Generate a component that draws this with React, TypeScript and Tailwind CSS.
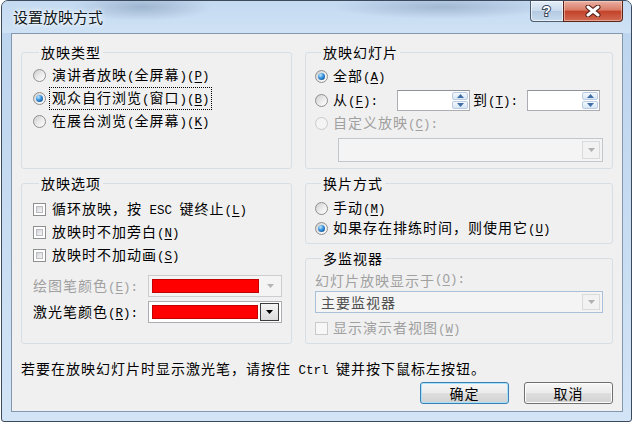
import React from 'react';

const cjk = "font-['Noto_Sans_CJK_SC',sans-serif]";
// half-width latin glyphs, 7.5px per char like the dialog font
const mono = "font-['Liberation_Mono',monospace] text-[12.5px] tracking-normal";

// access key like (P) with underlined letter
function Key({ k, colon = false }: { k: string; colon?: boolean }) {
  return (
    <span className={`${mono} whitespace-pre`}>
      (<span className="underline underline-offset-2">{k}</span>){colon ? ':' : ''}
    </span>
  );
}

function Radio({ checked = false, disabled = false }: { checked?: boolean; disabled?: boolean }) {
  return (
    <span
      className={`flex h-[13px] w-[13px] shrink-0 items-center justify-center rounded-full border ${
        disabled
          ? 'border-[#cacaca] bg-[#f4f4f4]'
          : 'border-[#8f8f8f] bg-[linear-gradient(135deg,#cdcdcd_0%,#ededed_55%,#ffffff_100%)]'
      }`}
    >
      {checked && (
        <span className="h-[7px] w-[7px] rounded-full bg-[radial-gradient(circle_at_35%_30%,#bfeaff_0%,#3590dc_45%,#0a3b78_100%)]" />
      )}
    </span>
  );
}

function Check({ disabled = false }: { disabled?: boolean }) {
  return (
    <span
      className={`block h-[13px] w-[13px] shrink-0 border p-[2px] ${
        disabled ? 'border-[#cacaca] bg-[#f7f7f7]' : 'border-[#8f8f8f] bg-white'
      }`}
    >
      {!disabled && <span className="block h-full w-full border border-[#b9bdc2] bg-[linear-gradient(135deg,#d2d4d7,#f7f7f7)]" />}
    </span>
  );
}

function Tri({ color, up = false }: { color: string; up?: boolean }) {
  return (
    <svg width="7" height="4" viewBox="0 0 7 4">
      <path d={up ? 'M0 4 L3.5 0 L7 4Z' : 'M0 0 L7 0 L3.5 4Z'} fill={color} />
    </svg>
  );
}

function Spin() {
  return (
    <div className="flex h-[21px] w-[73px] shrink-0 justify-end border border-[#abadb3] border-t-[#8e9299] bg-white p-[1px]">
      <div className="flex w-[16px] flex-col gap-[1px]">
        <div className="flex flex-1 items-center justify-center rounded-[2px] border border-[#b9cbe0] bg-[linear-gradient(#f4f9fe,#d8e6f5)]">
          <Tri up color="#3f6fa6" />
        </div>
        <div className="flex flex-1 items-center justify-center rounded-[2px] border border-[#b9cbe0] bg-[linear-gradient(#f4f9fe,#d8e6f5)]">
          <Tri color="#3f6fa6" />
        </div>
      </div>
    </div>
  );
}

function ColorCombo({ disabled = false }: { disabled?: boolean }) {
  return (
    <div
      className={`flex h-[22px] w-[134px] items-stretch border p-[3px] pr-[2px] ${
        disabled ? 'border-[#cdcdcd] bg-[#f4f4f4]' : 'border-[#abadb3] bg-white'
      }`}
    >
      <div className="flex-1 border border-[#c40000] bg-[#ff0000]" />
      {disabled ? (
        <div className="ml-[2px] flex w-[18px] items-center justify-center">
          <Tri color="#b5b5b5" />
        </div>
      ) : (
        <div className="my-[-2px] ml-[2px] flex w-[19px] items-center justify-center border border-[#3c3c3c] bg-[linear-gradient(#f4f4f4,#dcdcdc)]">
          <Tri color="#000" />
        </div>
      )}
    </div>
  );
}

function Group({
  title,
  className,
  children,
}: {
  title: string;
  className: string;
  children: React.ReactNode;
}) {
  return (
    <fieldset className={`rounded-[3px] border border-[#d5dfe5] ${className}`}>
      <legend className="ml-[6px] px-[2px] leading-[16px]">{title}</legend>
      {children}
    </fieldset>
  );
}

function DlgButton({ label, primary = false }: { label: string; primary?: boolean }) {
  return (
    <button
      className={`flex h-[22px] w-[89px] items-center justify-center rounded-[3px] border leading-[16px] bg-[linear-gradient(#f6f6f6_0%,#ececec_48%,#dedede_52%,#d2d2d2_100%)] ${
        primary
          ? 'border-[#3c7fb1] shadow-[inset_0_0_0_1px_#a8e1fb]'
          : 'border-[#707070] shadow-[inset_0_0_0_1px_#fcfcfc]'
      }`}
    >
      {label}
    </button>
  );
}

export default function App() {
  return (
    <div className={`h-[423px] w-[638px] overflow-hidden bg-white ${cjk} text-[14px] leading-[16px] tracking-[1px] text-black`}>
      <div className="ml-[1px] flex h-[422px] w-[631px] flex-col rounded-t-[7px] rounded-b-[3px] border border-[#3b4a5c] bg-[linear-gradient(180deg,#bcd4ee_0%,#c6dbf1_45%,#d2e4f6_100%)]">
        {/* title bar */}
        <div className="flex h-[32px] shrink-0 items-start rounded-t-[6px] bg-[radial-gradient(ellipse_70px_14px_at_140px_6px,rgba(70,95,130,0.3),transparent),radial-gradient(ellipse_110px_12px_at_440px_6px,rgba(70,95,130,0.28),transparent),linear-gradient(180deg,#c4daf1,#cfe2f5)] pl-[11px] pr-[8px]">
          <span className="mt-[7px] text-[15px] leading-[18px] tracking-normal text-[#101820] [text-shadow:0_0_6px_#fff,0_0_3px_#fff]">
            设置放映方式
          </span>
          <div className="ml-auto flex h-[21px]">
            <div className="flex w-[33px] items-center justify-center rounded-bl-[4px] border border-r-0 border-t-0 border-[#4e5d70] bg-[linear-gradient(#e4eef8_0%,#c9daec_50%,#b4cae2_51%,#c8dbee_100%)] shadow-[inset_0_0_0_1px_rgba(255,255,255,0.6)]">
              <svg width="14" height="16" viewBox="0 0 14 16">
                <text
                  x="7"
                  y="13"
                  textAnchor="middle"
                  fontFamily="Liberation Sans, sans-serif"
                  fontWeight="bold"
                  fontSize="14"
                  fill="#fff"
                  stroke="#3a4a5e"
                  strokeWidth="2"
                  paintOrder="stroke"
                >
                  ?
                </text>
              </svg>
            </div>
            <div className="flex w-[60px] items-center justify-center rounded-br-[4px] border border-t-0 border-[#5a2418] bg-[linear-gradient(#eab1a4_0%,#d97c67_45%,#c4432b_52%,#d26a52_100%)] shadow-[inset_0_0_0_1px_rgba(255,220,210,0.5)]">
              <svg width="18" height="12" viewBox="0 0 18 12">
                <path d="M4 2 L14 10 M14 2 L4 10" stroke="#4a1a12" strokeWidth="5" strokeLinecap="round" />
                <path d="M4 2 L14 10 M14 2 L4 10" stroke="#ffffff" strokeWidth="3" strokeLinecap="round" />
              </svg>
            </div>
          </div>
        </div>

        {/* client area */}
        <div className="mb-[9px] ml-[9px] mr-[8px] flex flex-1 flex-col border border-[#8397ae] bg-[#f0f0f0] px-[9px] pt-[10px]">
          <div className="grid grid-cols-[271px_308px] gap-x-[13px] gap-y-[6px]">
            <Group title="放映类型" className="h-[125px] pl-[11px]">
              <div className="pt-[4px]">
                <div className="flex h-[23px] items-center">
                  <Radio />
                  <span className="ml-[6px]">
                    演讲者放映<span className={mono}>(</span>全屏幕<span className={mono}>)</span>
                    <Key k="P" />
                  </span>
                </div>
                <div className="flex h-[23px] items-center">
                  <Radio checked />
                  <span className="ml-[5px] pl-[1px] outline-1 outline-dotted outline-black outline-offset-[1px]">
                    观众自行浏览<span className={mono}>(</span>窗口<span className={mono}>)</span>
                    <Key k="B" />
                  </span>
                </div>
                <div className="flex h-[23px] items-center">
                  <Radio />
                  <span className="ml-[6px]">
                    在展台浏览<span className={mono}>(</span>全屏幕<span className={mono}>)</span>
                    <Key k="K" />
                  </span>
                </div>
              </div>
            </Group>

            <Group title="放映幻灯片" className="h-[125px] pl-[9px]">
              <div className="pt-[4px]">
                <div className="flex h-[24px] items-center">
                  <Radio checked />
                  <span className="ml-[5px]">
                    全部<Key k="A" />
                  </span>
                </div>
                <div className="flex h-[24px] items-center">
                  <div className="flex w-[82px] items-center">
                    <Radio />
                    <span className="ml-[5px]">
                      从<Key k="F" colon />
                    </span>
                  </div>
                  <Spin />
                  <span className="w-[57px] pl-[3px]">
                    到<Key k="T" colon />
                  </span>
                  <Spin />
                </div>
                <div className="flex h-[22px] items-center">
                  <Radio disabled />
                  <span className="ml-[5px] text-[#a0a0a0]">
                    自定义放映<Key k="C" colon />
                  </span>
                </div>
                <div className="ml-[23px] mt-[4px] flex h-[24px] w-[265px] justify-end border border-[#c2c7cc] bg-[#f4f4f4] p-[2px]">
                  <div className="flex w-[18px] items-center justify-center border border-[#dadada] bg-[#f2f2f2]">
                    <Tri color="#b0b0b0" />
                  </div>
                </div>
              </div>
            </Group>

            <Group title="放映选项" className="h-[169px] pl-[11px]">
              <div className="pt-[7px]">
                <div className="flex h-[23px] items-center">
                  <Check />
                  <span className="ml-[6px]">
                    循环放映，按<span className={`${mono} whitespace-pre`}> ESC </span>键终止<Key k="L" />
                  </span>
                </div>
                <div className="flex h-[23px] items-center">
                  <Check />
                  <span className="ml-[6px]">
                    放映时不加旁白<Key k="N" />
                  </span>
                </div>
                <div className="flex h-[23px] items-center">
                  <Check />
                  <span className="ml-[6px]">
                    放映时不加动画<Key k="S" />
                  </span>
                </div>
                <div className="mt-[8px] flex h-[22px] items-center">
                  <span className="w-[115px] text-[#a0a0a0]">
                    绘图笔颜色<Key k="E" colon />
                  </span>
                  <ColorCombo disabled />
                </div>
                <div className="mt-[4px] flex h-[22px] items-center">
                  <span className="w-[115px]">
                    激光笔颜色<Key k="R" colon />
                  </span>
                  <ColorCombo />
                </div>
              </div>
            </Group>

            <div className="flex flex-col gap-[6px]">
              <Group title="换片方式" className="h-[69px] pl-[9px]">
                <div className="pt-[7px]">
                  <div className="flex h-[20px] items-center">
                    <Radio />
                    <span className="ml-[5px]">
                      手动<Key k="M" />
                    </span>
                  </div>
                  <div className="flex h-[20px] items-center">
                    <Radio checked />
                    <span className="ml-[5px]">
                      如果存在排练时间，则使用它<Key k="U" />
                    </span>
                  </div>
                </div>
              </Group>
              <Group title="多监视器" className="h-[94px] pl-[9px]">
                <div className="pt-[4px]">
                  <div className="flex h-[20px] items-center text-[#a0a0a0]">
                    幻灯片放映显示于<Key k="O" colon />
                  </div>
                  <div className="mt-[1px] flex h-[22px] w-[288px] items-stretch border border-[#a9c0d8] bg-[#f4f4f4] p-[2px]">
                    <span className="flex flex-1 items-center pl-[3px] text-[#505050]">主要监视器</span>
                    <div className="flex w-[18px] items-center justify-center border border-[#dadada] bg-[#f2f2f2]">
                      <Tri color="#b0b0b0" />
                    </div>
                  </div>
                  <div className="mt-[4px] flex h-[22px] items-center">
                    <Check disabled />
                    <span className="ml-[5px] text-[#a0a0a0]">
                      显示演示者视图<Key k="W" />
                    </span>
                  </div>
                </div>
              </Group>
            </div>
          </div>

          <div className="mt-[16px] h-[16px] whitespace-nowrap">
            若要在放映幻灯片时显示激光笔，请按住<span className={`${mono} whitespace-pre`}> Ctrl </span>
            键并按下鼠标左按钮。
          </div>

          <div className="mt-[6px] flex justify-end gap-[15px]">
            <DlgButton label="确定" primary />
            <DlgButton label="取消" />
          </div>
        </div>
      </div>
    </div>
  );
}
